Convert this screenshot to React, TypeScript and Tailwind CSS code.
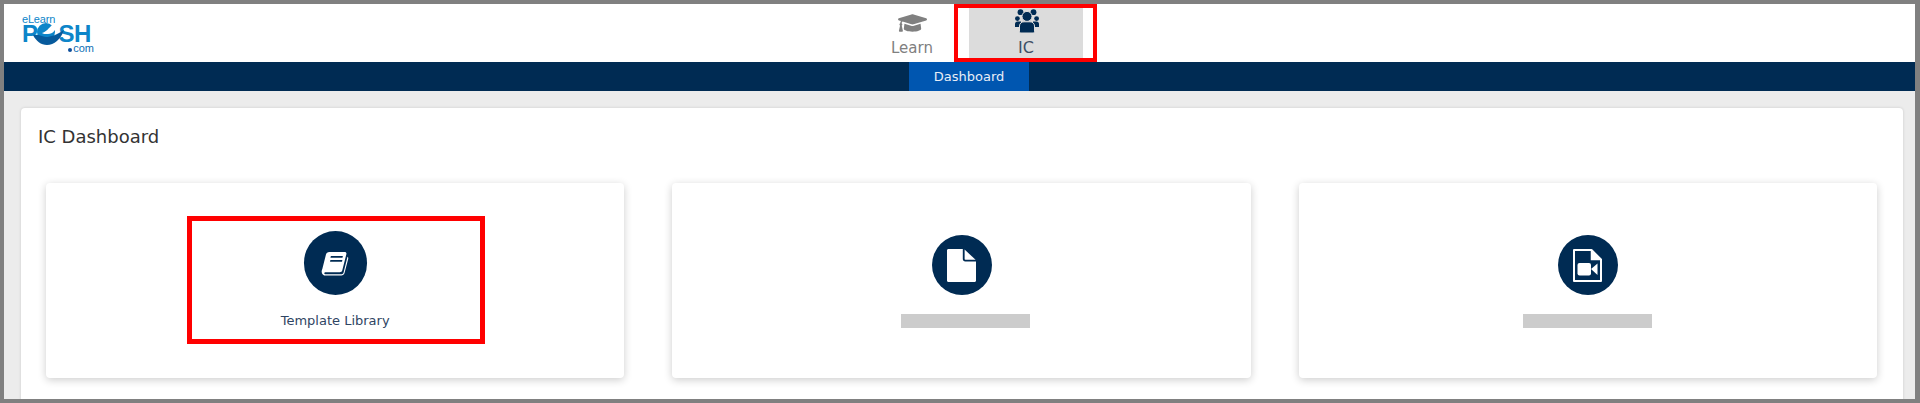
import React from "react";
import { FaGraduationCap } from "react-icons/fa";

const font = { fontFamily: '"DejaVu Sans", Verdana, sans-serif' };

function Logo() {
  return (
    <div className="relative w-[72px] h-[42px] [font-family:'Liberation_Sans',Arial,sans-serif] text-[#0d85c9]">
      <div className="absolute left-0 top-[2px] text-[11px] leading-[7px] tracking-[-0.2px]">eLearn</div>
      <div className="absolute left-0 top-[11px] text-[24px] leading-[17px] font-bold tracking-[-0.5px] flex">
        <span>P</span>
        <span className="w-[21px]" />
        <span>SH</span>
      </div>
      <svg className="absolute left-[11px] top-[8px]" width="32" height="24" viewBox="0 0 32 24">
        <circle cx="13" cy="10" r="9" fill="#0d85c9" />
        <path d="M9 11 C13 10 16 6 20 2 L24 2 C23 8 20 12 15 12 C12 12 10 12 9 11Z" fill="#ffffff" />
        <path d="M0 13 C6 12 9 15 13 15 C18 15 23 13 31 8 C28 17 21 23 14 23 C8 23 3 19 0 13Z" fill="#075a9c" />
      </svg>
      <div className="absolute right-0 top-[31px] text-[11px] leading-[7px] text-[#0d6fb5] flex items-center">
        <span className="w-[4px] h-[4px] rounded-full bg-[#0d4f9c] mr-[1px] mt-[3px]" />
        com
      </div>
    </div>
  );
}

function BookIcon() {
  return (
    <svg width="30" height="25" viewBox="0 0 30 26">
      <path d="M9 1 H25 C26.5 1 27.2 2 26.8 3.5 L22.6 20 C22.2 21.5 21.2 22 20 22 H5.5 C4 22 3.5 23 4 23.7 C4.4 24.2 5 24.3 5.8 24.3 H21 C23 24.3 23.6 23.6 24 22.2 L28 6 C28.6 6.4 29 7 28.7 8.2 L24.9 23 C24.5 24.6 23.2 25.6 21.6 25.6 H5.5 C2.5 25.6 0.7 23.4 1.2 20.6 C1.3 20 1.5 19.4 1.8 18.7 L5.6 3.6 C6 2 7.3 1 9 1Z" fill="#ffffff" />
      <rect x="10.5" y="5.2" width="12.5" height="1.9" fill="#002b53" transform="skewX(-12) translate(1.3 0)" />
      <rect x="10" y="9.4" width="12.5" height="1.9" fill="#002b53" transform="skewX(-12) translate(2.2 0)" />
    </svg>
  );
}

function GroupIcon() {
  return (
    <svg className="ml-[2px]" width="25" height="24" viewBox="0 0 25 24" fill="#002b53">
      <circle cx="5.5" cy="3.2" r="2.9" />
      <circle cx="18.5" cy="3.2" r="2.9" />
      <circle cx="2.4" cy="9.6" r="2.4" />
      <circle cx="21.6" cy="9.6" r="2.4" />
      <path d="M0 18 V15 C0 13.6 1 12.6 2.5 12.6 H6 V18Z" />
      <path d="M24 18 V15 C24 13.6 23 12.6 21.5 12.6 H18 V18Z" />
      <circle cx="12" cy="7.4" r="5" stroke="#dcdcdc" strokeWidth="1" />
      <path d="M4.5 22.5 V17 C4.5 14.4 6.6 12.8 9 12.8 H15 C17.4 12.8 19.5 14.4 19.5 17 V22.5 C19.5 23.4 18.9 24 18 24 H6 C5.1 24 4.5 23.4 4.5 22.5Z" stroke="#dcdcdc" strokeWidth="1" />
    </svg>
  );
}

function FileIcon() {
  return (
    <svg width="29" height="33" viewBox="0 0 29 33" fill="#ffffff">
      <path d="M1.5 0 H15.8 V10 C15.8 11.5 16.8 12.5 18.3 12.5 H29 V31.5 C29 32.4 28.4 33 27.5 33 H1.5 C0.6 33 0 32.4 0 31.5 V1.5 C0 0.6 0.6 0 1.5 0Z" />
      <path d="M17.6 0.6 L28.6 10.8 H18.4 C17.9 10.8 17.6 10.5 17.6 10Z" />
    </svg>
  );
}

function FileVideoIcon() {
  return (
    <svg width="29" height="33" viewBox="0 0 29 33" fill="none">
      <path d="M1 1 H18.5 L28 10.5 V32 H1Z" stroke="#ffffff" strokeWidth="2" strokeLinejoin="round" />
      <path d="M18.5 1 V10.5 H28" stroke="#ffffff" strokeWidth="1.5" />
      <path d="M19 1.5 L27.5 10 H19Z" fill="#ffffff" />
      <rect x="4.5" y="14" width="13.5" height="12.5" rx="2" fill="#ffffff" />
      <path d="M18 20 L24.5 14.5 V26 Z" fill="#ffffff" />
    </svg>
  );
}

function Circle({ children, size }: { children: React.ReactNode; size: string }) {
  return (
    <div className={`${size} rounded-full bg-[#002b53] flex items-center justify-center`}>{children}</div>
  );
}

export default function App() {
  return (
    <div
      className="w-[1920px] h-[403px] overflow-hidden bg-[#ececec] border-t-4 border-b-4 border-l-4 border-r-[5px] border-[#808080] flex flex-col"
      style={font}
    >
      <header className="h-[58px] bg-white shrink-0 relative flex justify-center pl-[19px]">
        <div className="absolute left-[18px] top-[10px]">
          <Logo />
        </div>
        <div className="w-[114px] h-[57px] flex flex-col items-center pt-[6px] text-[#808080]">
          <FaGraduationCap className="text-[29px] h-[26px]" />
          <span className="text-[15px] leading-[18px] mt-[3px]">Learn</span>
        </div>
        <div className="w-[114px] h-[57px] relative flex flex-col items-center pt-[5px] bg-[#dcdcdc] text-[#3d4f66]">
          <GroupIcon />
          <span className="text-[16px] leading-[18px] mt-[6px]">IC</span>
          <div className="absolute -left-[15px] -right-[14px] top-0 -bottom-[1px] border-4 border-[#ff0000]" />
        </div>
      </header>
      <nav className="h-[29px] shrink-0 bg-[#002b53] flex justify-center pl-[19px]">
        <div className="w-[120px] bg-[#0056b0] text-[#e8eef7] text-[13px] flex items-center justify-center">
          Dashboard
        </div>
      </nav>
      <main className="flex-1 min-h-0 pt-[17px] pl-[17px] pr-[12px] overflow-hidden">
        <section className="bg-white rounded-t-[4px] shadow-[0_0_3px_rgba(0,0,0,0.15)] h-[320px] px-[17px] pt-[17px]">
          <h1 className="text-[18px] leading-[24px] text-[#333333]">IC Dashboard</h1>
          <div className="grid grid-cols-3 gap-[48px] mt-[34px] pl-[8px] pr-[9px]">
            <div className="h-[195px] rounded-[4px] bg-white shadow-[0_2px_9px_rgba(0,0,0,0.2)] relative flex flex-col items-center pt-[48px]">
              <Circle size="w-[63px] h-[64px]">
                <BookIcon />
              </Circle>
              <span className="text-[13px] leading-[16px] text-[#2f4563] mt-[18px]">Template Library</span>
              <div className="absolute left-[141px] w-[298px] top-[33px] h-[128px] border-[5px] border-[#ff0000]" />
            </div>
            <div className="h-[195px] rounded-[4px] bg-white shadow-[0_2px_9px_rgba(0,0,0,0.2)] flex flex-col items-center pt-[52px]">
              <div className="ml-[1px]">
                <Circle size="w-[60px] h-[60px]">
                  <FileIcon />
                </Circle>
              </div>
              <div className="w-[129px] h-[14px] bg-[#cccccc] mt-[19px] ml-[8px]" />
            </div>
            <div className="h-[195px] rounded-[4px] bg-white shadow-[0_2px_9px_rgba(0,0,0,0.2)] flex flex-col items-center pt-[52px]">
              <Circle size="w-[60px] h-[60px]">
                <FileVideoIcon />
              </Circle>
              <div className="w-[129px] h-[14px] bg-[#cccccc] mt-[19px]" />
            </div>
          </div>
        </section>
      </main>
    </div>
  );
}
